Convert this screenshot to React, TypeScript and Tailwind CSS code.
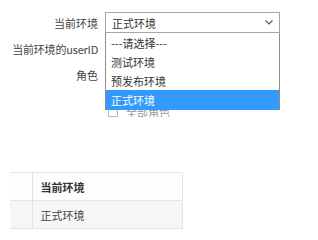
import React from 'react';

const options = ['---请选择---', '测试环境', '预发布环境', '正式环境'];

const App: React.FC = () => {
  return (
    <div className="relative w-[318px] h-[240px] overflow-hidden bg-white text-[11px] leading-[14px] text-[#333] font-['Microsoft_YaHei','Noto_Sans_CJK_SC',sans-serif]">
      {/* 表单 */}
      <div className="flex flex-col pt-[12px]">
        <div className="flex items-center h-[21px]">
          <label className="w-[98px] text-right text-[#444]">当前环境</label>
          <div className="ml-[7px] w-[175px] h-[21px] border border-[#a6a6a6] flex items-center justify-between pl-[6px] pr-[6px]">
            <span>正式环境</span>
            <svg width="8" height="5" viewBox="0 0 8 5" className="text-[#555]">
              <path d="M0.5 0.5 L4 4 L7.5 0.5" fill="none" stroke="currentColor" strokeWidth="1.1" />
            </svg>
          </div>
        </div>
        <div className="flex items-center h-[21px] mt-[5px]">
          <label className="w-[98px] text-right text-[#444] tracking-[-0.2px]">当前环境的userID</label>
        </div>
        <div className="flex items-center h-[21px] mt-[5px]">
          <label className="w-[98px] text-right text-[#444]">角色</label>
        </div>
        {/* 被下拉框遮住的复选行 */}
        <div className="mt-[25px] h-[7px] overflow-hidden pl-[108px]">
          <div className="-mt-[5px] flex items-center gap-[8px] text-[#999]">
            <span className="w-[10px] h-[10px] border border-[#bbb] bg-white" />
            <span>全部角色</span>
          </div>
        </div>
      </div>

      {/* 下拉列表 */}
      <ul className="absolute left-[105px] top-[33px] w-[175px] h-[77px] bg-white border border-t-0 border-[#8c8c8c]">
        {options.map((o, i) => (
          <li
            key={i}
            className={`flex items-center pl-[5px] ${i === options.length - 1 ? 'h-[20px] bg-[#3399ff] text-white' : 'h-[19px] text-[#333]'}`}
          >
            {o}
          </li>
        ))}
      </ul>

      {/* 表格 */}
      <table className="mt-[55px] ml-[10px] w-[173px] border-collapse">
        <tbody>
          <tr className="h-[28px] bg-[#fdfdfd]">
            <td className="w-[22px] p-0 border-t border-b border-r border-[#e4e4e4]" />
            <td className="pl-[8px] font-bold text-[#333] border-t border-b border-r border-[#e4e4e4]">当前环境</td>
          </tr>
          <tr className="h-[28px] bg-[#f6f6f6]">
            <td className="w-[22px] p-0 border-b border-r border-[#e4e4e4]" />
            <td className="pl-[8px] text-[#444] border-b border-r border-[#e4e4e4]">正式环境</td>
          </tr>
        </tbody>
      </table>
    </div>
  );
};

export default App;
